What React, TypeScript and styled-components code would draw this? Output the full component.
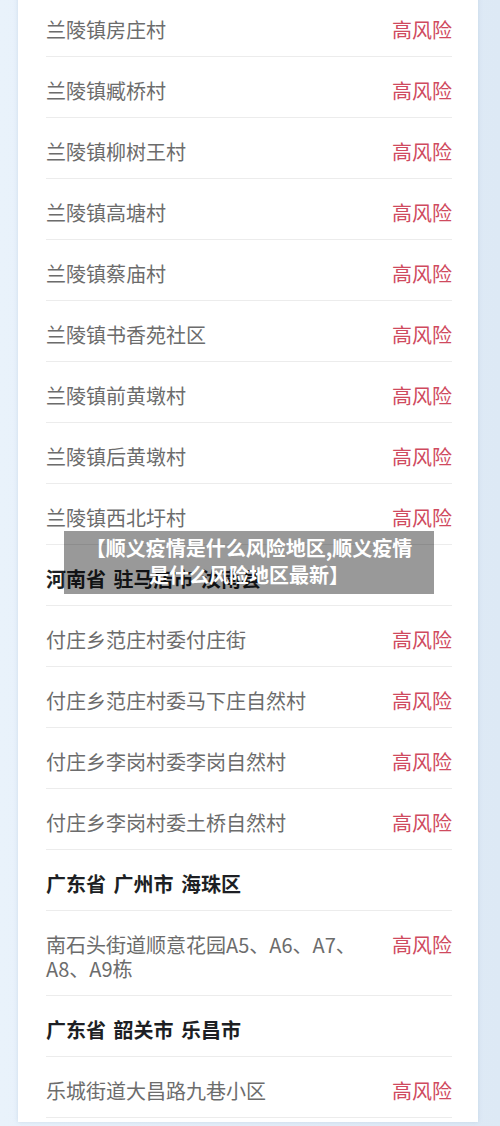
import React from "react";
import styled, {createGlobalStyle} from "styled-components";

const GlobalStyle = createGlobalStyle`
  html, body {
    margin: 0;
    padding: 0;
    background: #e5eff9;
  }
  body {
    font-family: "Noto Sans CJK SC", "Noto Sans", sans-serif;
  }
`;

const Page = styled.div`
  position: relative;
  height: 1126px;
  overflow: hidden;
  background: linear-gradient(90deg, #e9f2fb 0%, #dde9f5 100%);
`;

const Card = styled.div`
  margin: 0 22px 0 18px;
  height: 100%;
  background: #fff;
  padding: 0 26px 0 28px;
  box-shadow: 0 0 4px rgba(150, 175, 205, 0.35);
`;

const List = styled.ul`
  list-style: none;
  margin: -4px 0 0;
  padding: 0;
`;

const Row = styled.li`
  display: flex;
  align-items: flex-start;
  justify-content: space-between;
  gap: 24px;
  padding: 22px 0 14px;
  border-bottom: 1px solid #ececec;
  font-size: 20px;
  line-height: 24px;
`;

const Place = styled.span<{$heading?: boolean}>`
  flex: 1;
  max-width: 330px;
  color: ${p => (p.$heading ? "#1d1f24" : "#6c6c6c")};
  font-weight: ${p => (p.$heading ? 700 : 400)};
  word-spacing: ${p => (p.$heading ? "3px" : "0")};
`;

const Risk = styled.span`
  color: #cf4a5e;
  flex-shrink: 0;
`;

const Banner = styled.div`
  position: absolute;
  left: 64px;
  top: 531px;
  width: 370px;
  height: 63px;
  box-sizing: border-box;
  padding: 3px 16px 0;
  background: rgba(0, 0, 0, 0.4);
  color: #fff;
  font-size: 20px;
  font-weight: 700;
  line-height: 27px;
  text-align: center;
`;

type Item = {name: string; heading?: boolean};

const items: Item[] = [
    {name: "兰陵镇房庄村"},
    {name: "兰陵镇臧桥村"},
    {name: "兰陵镇柳树王村"},
    {name: "兰陵镇高塘村"},
    {name: "兰陵镇蔡庙村"},
    {name: "兰陵镇书香苑社区"},
    {name: "兰陵镇前黄墩村"},
    {name: "兰陵镇后黄墩村"},
    {name: "兰陵镇西北圩村"},
    {name: "河南省 驻马店市 汝南县", heading: true},
    {name: "付庄乡范庄村委付庄街"},
    {name: "付庄乡范庄村委马下庄自然村"},
    {name: "付庄乡李岗村委李岗自然村"},
    {name: "付庄乡李岗村委土桥自然村"},
    {name: "广东省 广州市 海珠区", heading: true},
    {name: "南石头街道顺意花园A5、A6、A7、A8、A9栋"},
    {name: "广东省 韶关市 乐昌市", heading: true},
    {name: "乐城街道大昌路九巷小区"},
];

export default function App(): JSX.Element {
    return <Page>
        <GlobalStyle/>
        <Card>
            <List>
                {items.map((item, i) =>
                    <Row key={i}>
                        <Place $heading={item.heading}>{item.name}</Place>
                        {!item.heading && <Risk>高风险</Risk>}
                    </Row>
                )}
            </List>
        </Card>
        <Banner>【顺义疫情是什么风险地区,顺义疫情是什么风险地区最新】</Banner>
    </Page>
}
